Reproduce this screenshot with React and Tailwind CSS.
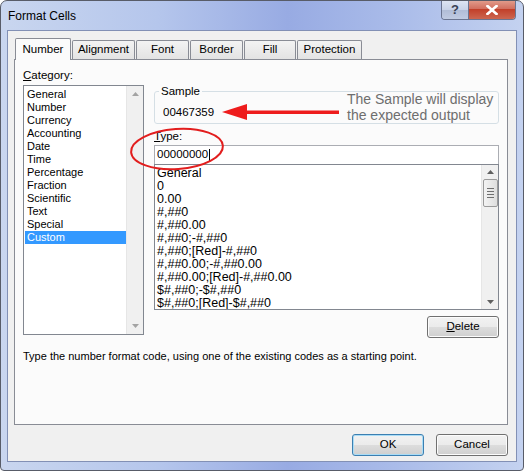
import React from 'react';

const categories = [
  'General', 'Number', 'Currency', 'Accounting', 'Date', 'Time',
  'Percentage', 'Fraction', 'Scientific', 'Text', 'Special', 'Custom',
];

const formats = [
  'General', '0', '0.00', '#,##0', '#,##0.00', '#,##0;-#,##0',
  '#,##0;[Red]-#,##0', '#,##0.00;-#,##0.00', '#,##0.00;[Red]-#,##0.00',
  '$#,##0;-$#,##0', '$#,##0;[Red]-$#,##0',
];

const tabs = ['Alignment', 'Font', 'Border', 'Fill', 'Protection'];
const tabWidths = ['w-[63px]', 'w-[53px]', 'w-[53px]', 'w-[52px]', 'w-[65px]'];

const UpArrow = ({ color = '#a3a3a3' }) => (
  <svg width="7" height="4" viewBox="0 0 7 4"><path d="M3.5 0 L7 4 L0 4 Z" fill={color} /></svg>
);
const DownArrow = ({ color = '#a3a3a3' }) => (
  <svg width="7" height="4" viewBox="0 0 7 4"><path d="M0 0 L7 0 L3.5 4 Z" fill={color} /></svg>
);

const WinButton = ({ children, focused }) => (
  <div
    className={`w-[72px] h-[22px] rounded-[3px] flex items-center justify-center text-[11.5px] text-black ${
      focused
        ? 'border border-[#3c7fb1] shadow-[inset_0_0_0_1px_#a9dcf6]'
        : 'border border-[#707070] shadow-[inset_0_0_0_1px_#fcfcfc]'
    } bg-[linear-gradient(#f2f2f2_0%,#ebebeb_49%,#dddddd_50%,#cfcfcf_100%)]`}
  >
    {children}
  </div>
);

export default function App() {
  return (
    <div className="relative w-[524px] h-[471px] overflow-hidden rounded-t-[7px] rounded-b-[4px] border border-[#585c68] bg-[linear-gradient(90deg,#c9d6ef_0%,#b5c6ec_30%,#98abe3_55%,#a9bbe9_75%,#c4d2f0_100%)] font-['Liberation_Sans',Arial,sans-serif] text-black">
      {/* title bar */}
      <div className="h-[29px] flex items-center pl-[7px] text-[12px] text-black">Format Cells</div>

      {/* caption buttons */}
      <div className="absolute top-[-1px] right-[7px] flex h-[20px] rounded-b-[4px] border border-t-0 border-[#6a7490] overflow-hidden">
        <div className="w-[27px] flex items-center justify-center bg-[linear-gradient(#dfe6f4_0%,#c9d3e8_50%,#b0bcd6_51%,#c0cbe2_100%)] border-r border-[#6a7490] text-[13px] font-bold text-[#3a4255]">
          ?
        </div>
        <div className="w-[46px] flex items-center justify-center bg-[linear-gradient(#e3a08f_0%,#d27060_45%,#c2402a_50%,#cc6650_100%)]">
          <svg width="12" height="10" viewBox="0 0 12 10">
            <path d="M1.5 1 L10.5 9 M10.5 1 L1.5 9" stroke="#ffffff" strokeWidth="2.6" strokeLinecap="square" />
          </svg>
        </div>
      </div>

      {/* client area */}
      <div className="mx-[6px] h-[432px] bg-[#f0f0f0] border border-[#8290b5] flex flex-col pl-[6px] pr-[8px] pt-[6px]">
        {/* tabs */}
        <div className="flex items-end h-[22px] pl-[1px] relative z-10">
          <div className="w-[56px] h-[22px] -mb-px bg-[#fbfbfb] border border-b-0 border-[#898c95] rounded-t-[2px] flex items-center justify-center text-[11.5px]">
            Number
          </div>
          {tabs.map((t, i) => (
            <div
              key={t}
              className={`${tabWidths[i]} h-[19px] ml-[1px] bg-[linear-gradient(#f3f3f3,#e3e3e3)] border border-b-0 border-[#898c95] rounded-t-[2px] flex items-center justify-center text-[11.5px]`}
            >
              {t}
            </div>
          ))}
        </div>

        {/* panel */}
        <div className="w-[494px] h-[366px] bg-[#fbfbfb] border border-[#898c95] flex flex-col pl-[8px] pt-[9px]">
          <div className="flex gap-[10px]">
            {/* category column */}
            <div className="w-[121px] flex flex-col">
              <div className="h-[13px] leading-[13px] text-[11.5px]">
                <span className="underline">C</span>ategory:
              </div>
              <div className="mt-[3px] h-[250px] border border-[#828790] bg-white flex">
                <div className="flex-1 flex flex-col pt-[2px] pl-[1px]">
                  {categories.map((c) => (
                    <div
                      key={c}
                      className={`h-[13px] leading-[13px] text-[11px] pl-[2px] ${
                        c === 'Custom' ? 'bg-[#3399ff] text-white' : ''
                      }`}
                    >
                      {c}
                    </div>
                  ))}
                </div>
                <div className="w-[17px] bg-[#f0f0f0] border-l border-[#e6e6e6] flex flex-col items-center justify-between py-[6px]">
                  <UpArrow />
                  <DownArrow />
                </div>
              </div>
            </div>

            {/* right column */}
            <div className="w-[345px] flex flex-col">
              <div className="relative mt-[22px] h-[33px] border border-[#d5dfe5] rounded-[3px]">
                <span className="absolute -top-[7px] left-[4px] px-[2px] bg-[#fbfbfb] text-[11.5px] leading-[13px]">Sample</span>
                <div className="pl-[8px] pt-[14px] text-[11.5px] leading-[13px]">00467359</div>
              </div>
              <div className="mt-[6px] h-[13px] leading-[13px] text-[11.5px]">
                <span className="underline">T</span>ype:
              </div>
              <div className="mt-[2px] h-[20px] border border-[#abadb3] bg-white flex items-center pl-[2px] text-[11.5px]">
                00000000<span className="inline-block w-px h-[13px] bg-black ml-[1px]" />
              </div>
              <div className="h-[146px] -mt-px border border-[#828790] bg-white flex">
                <div className="flex-1 flex flex-col overflow-hidden pl-[2px] pt-[2px]">
                  {formats.map((f) => (
                    <div key={f} className="h-[13px] leading-[13px] text-[12.5px] shrink-0">
                      {f}
                    </div>
                  ))}
                </div>
                <div className="w-[17px] bg-[#f0f0f0] border-l border-[#e6e6e6] flex flex-col items-center py-[5px]">
                  <UpArrow color="#606060" />
                  <div className="mt-[5px] w-[15px] h-[28px] rounded-[2px] border border-[#9a9a9a] bg-[linear-gradient(90deg,#f3f3f3,#dedede)] flex flex-col items-center justify-center gap-[2px]">
                    <div className="w-[7px] h-px bg-[#6f6f6f]" />
                    <div className="w-[7px] h-px bg-[#6f6f6f]" />
                    <div className="w-[7px] h-px bg-[#6f6f6f]" />
                    <div className="w-[7px] h-px bg-[#6f6f6f]" />
                  </div>
                  <div className="flex-1" />
                  <DownArrow color="#606060" />
                </div>
              </div>
              <div className="mt-[6px] flex justify-end">
                <WinButton>
                  <span className="underline">D</span>elete
                </WinButton>
              </div>
            </div>
          </div>
          <div className="mt-[12px] text-[11px] leading-[13px]">
            Type the number format code, using one of the existing codes as a starting point.
          </div>
        </div>

        {/* dialog buttons */}
        <div className="mt-[9px] flex justify-end gap-[12px]">
          <WinButton focused>OK</WinButton>
          <WinButton>Cancel</WinButton>
        </div>
      </div>

      {/* annotation overlay */}
      <div className="absolute left-[346px] top-[90px] text-[14px] leading-[16px] text-[#6e6e6e]">
        <div>The Sample will display</div>
        <div>the expected output</div>
      </div>
      <svg className="absolute left-0 top-0 pointer-events-none" width="524" height="471" viewBox="0 0 524 471">
        <path d="M221 111 L246 103 L246 119 Z" fill="#ee1c1c" />
        <rect x="244" y="109.5" width="94" height="3.5" fill="#ee1c1c" />
        <ellipse cx="176" cy="148" rx="46" ry="20" fill="none" stroke="#e21e1e" strokeWidth="2" transform="rotate(-4 176 148)" />
      </svg>
    </div>
  );
}
